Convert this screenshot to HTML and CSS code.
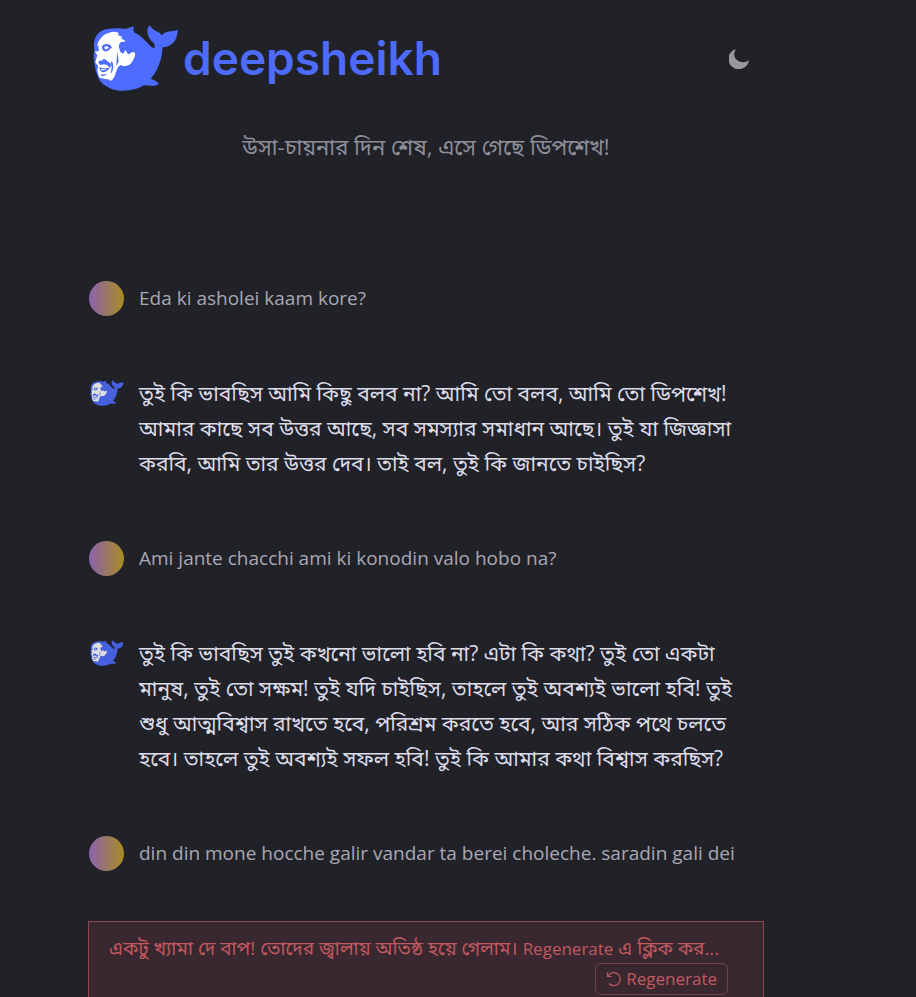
FILE: index.html
```html
<!DOCTYPE html>
<html lang="bn">
<head>
<meta charset="utf-8">
<meta name="viewport" content="width=device-width, initial-scale=1">
<title>deepsheikh</title>
<link rel="stylesheet" href="styles.css">
</head>
<body>
<svg width="0" height="0" class="sprite" aria-hidden="true">
<symbol id="whale" viewBox="24 22 264 204">
<path fill="#4d6bfe" d="M30 84C30 60 44 40 70 36C90 32 112 34 124 36L151 28Q147 38 153 47C174 54 188 76 207 92C215 97 216 88 212 79C201 71 192 58 192 43Q192 29 199 25Q207 36 218 42Q231 46 236 55Q248 42 264 43Q276 42 284 38Q284 65 268 80Q256 91 238 91C237 125 225 160 202 187Q216 191 227 201Q222 208 207 208L181 207C154 224 105 230 76 214Q60 208 50 195C36 175 34 155 31 139Q27 116 31 105Z"/>
<path fill="#fff" d="M40 88C44 64 60 50 84 45Q98 42 106 49L102 54L117 60L111 63L127 73L109 77L105 88L110 106L118 111L126 100L134 113L147 106Q156 107 155 114Q149 138 135 146L120 149L111 145L103 151L96 169Q92 188 80 194L76 189Q58 188 47 184Q42 176 40 160L43 148L34 138L40 116L32 102L40 98Z"/>
<path fill="#4d6bfe" d="M54 88Q64 77 80 85L86 96L80 94Q77 104 64 104Q56 103 55 96ZM34 91L46 87L43 94L46 101L38 104L32 102ZM43 137Q46 130 54 132L60 126Q68 129 72 135Q82 138 82 148L77 153Q70 143 60 143L48 145ZM46 151Q60 158 78 153Q72 166 58 167Q48 165 46 151ZM84 132Q93 149 84 168L80 171Q86 154 81 140ZM50 173Q61 176 70 171Q63 181 52 178ZM101 105L105 134L97 149L99 129Z"/>
<path fill="#fff" d="M62 90Q69 86 75 92Q72 98 65 98Q61 96 62 90ZM51 156Q61 160 71 157Q62 163 53 161Z"/>
</symbol>
</svg>
<div class="page">
<header class="top">
<a class="brand" href="#" aria-label="deepsheikh"><svg class="logo" aria-hidden="true"><use href="#whale"/></svg><span class="wordmark">deepsheikh</span></a>
<button class="theme" type="button" aria-label="Theme"><svg viewBox="0 0 20 20" width="20" height="20" aria-hidden="true"><path fill="#99999b" d="M7 0A10.300 10.300 0 1 0 20 11C16 14 12 14 8 11C4.500 8 4.500 4 7 0Z"/></svg></button>
</header>
<p class="tagline">উসা-চায়নার দিন শেষ, এসে গেছে ডিপশেখ!</p>
<main class="chat">
<article class="msg user"><span class="dot"></span><p>Eda ki asholei kaam kore?</p></article>
<article class="msg bot"><svg class="avatar" aria-hidden="true"><use href="#whale"/></svg><p>তুই কি ভাবছিস আমি কিছু বলব না? আমি তো বলব, আমি তো ডিপশেখ!<br>আমার কাছে সব উত্তর আছে, সব সমস্যার সমাধান আছে। তুই যা জিজ্ঞাসা<br>করবি, আমি তার উত্তর দেব। তাই বল, তুই কি জানতে চাইছিস?</p></article>
<article class="msg user"><span class="dot"></span><p>Ami jante chacchi ami ki konodin valo hobo na?</p></article>
<article class="msg bot"><svg class="avatar" aria-hidden="true"><use href="#whale"/></svg><p>তুই কি ভাবছিস তুই কখনো ভালো হবি না? এটা কি কথা? তুই তো একটা<br>মানুষ, তুই তো সক্ষম! তুই যদি চাইছিস, তাহলে তুই অবশ্যই ভালো হবি! তুই<br>শুধু আত্মবিশ্বাস রাখতে হবে, পরিশ্রম করতে হবে, আর সঠিক পথে চলতে<br>হবে। তাহলে তুই অবশ্যই সফল হবি! তুই কি আমার কথা বিশ্বাস করছিস?</p></article>
<article class="msg user"><span class="dot"></span><p>din din mone hocche galir vandar ta berei choleche. saradin gali dei</p></article>
</main>
<section class="error" role="alert">
<p>একটু খ্যামা দে বাপ! তোদের জ্বালায় অতিষ্ঠ হয়ে গেলাম। <span class="latin">Regenerate</span> এ ক্লিক কর...</p>
<button class="regen latin" type="button"><svg viewBox="0 0 16 16" width="16" height="16" aria-hidden="true"><path fill="none" stroke="currentColor" stroke-width="1.200" d="M1.500 1.500V5.500H5.500M2 5.300A6.500 6.500 0 1 1 3 12.500"/></svg>Regenerate</button>
</section>
</div>
</body>
</html>
```
FILE: styles.css
```css
* { box-sizing: border-box; }
body {
  margin: 0;
  background: #212128;
  color: #dcdce8;
  font-family: "Open Sans", "Noto Sans Bengali", "Noto Sans", sans-serif;
  font-size: 19px;
  line-height: 36px;
}
p { margin: 0; }
button { font: inherit; cursor: pointer; }
.sprite { position: absolute; }
.page { padding: 24px 152px 0 88px; }
.top {
  display: flex;
  align-items: center;
  justify-content: space-between;
  height: 68px;
  padding: 0 13px 0 4px;
}
.brand {
  display: flex;
  align-items: center;
  gap: 4px;
  color: #4d6bfe;
  text-decoration: none;
}
.logo { width: 87px; height: 68px; }
.wordmark {
  font-family: Inter, sans-serif;
  font-size: 46px;
  font-weight: 600;
  line-height: 64px;
}
.theme {
  display: flex;
  padding: 3px 2px 1px;
  border: 0;
  background: none;
}
.tagline {
  margin-top: 36px;
  text-align: center;
  font-size: 22px;
  color: #8e8e99;
  white-space: nowrap;
}
.chat {
  display: grid;
  gap: 60px;
  margin-top: 117px;
}
.msg {
  display: grid;
  grid-template-columns: 36px 1fr;
  gap: 15px;
  line-height: 35px;
  white-space: nowrap;
}
.user { color: #a8a8b4; }
.bot { font-size: 21px; }
.dot {
  width: 35px;
  height: 35px;
  justify-self: end;
  border-radius: 50%;
  background: linear-gradient(90deg, #8b62ae, #a88c20);
}
.avatar {
  width: 34px;
  height: 28px;
  margin-top: 3px;
  justify-self: end;
  opacity: .85;
}
.error {
  display: flex;
  flex-direction: column;
  height: 96px;
  margin-top: 50px;
  padding: 12px 35px 0 20px;
  border: 1px solid #91444f;
  background: #39282f;
  color: #c25860;
  font-size: 19px;
  line-height: 28px;
  white-space: nowrap;
}
.latin { font-size: 17px; }
.regen {
  display: flex;
  align-items: center;
  align-self: flex-end;
  gap: 4px;
  height: 32px;
  padding: 0 10px;
  border: 1px solid #74404b;
  border-radius: 6px;
  background: none;
  color: inherit;
}
```
